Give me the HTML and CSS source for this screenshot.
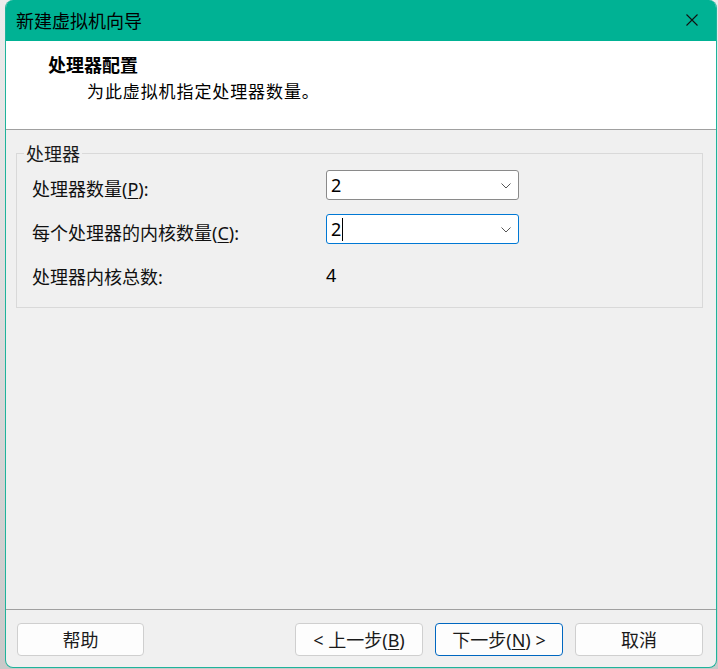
FILE: index.html
```html
<!DOCTYPE html>
<html lang="zh-CN">
<head>
<meta charset="utf-8">
<title>新建虚拟机向导</title>
<link rel="stylesheet" href="styles.css">
</head>
<body>
<div class="window">
  <div class="titlebar">
    <span class="title">新建虚拟机向导</span>
    <span class="close" aria-label="关闭">
      <svg width="12" height="12" viewBox="0 0 12 12"><path d="M0.5 0.5L11.5 11.5M11.5 0.5L0.5 11.5" stroke="#111" stroke-width="1.1" fill="none"/></svg>
    </span>
  </div>
  <div class="header">
    <div class="heading">处理器配置</div>
    <div class="subtitle">为此虚拟机指定处理器数量。</div>
  </div>
  <div class="content">
    <fieldset class="group">
      <legend class="legend">处理器</legend>
      <div class="rows">
        <label class="label">处理器数量(<u>P</u>):</label>
        <div class="combo">
          <span class="value">2</span>
          <svg class="chev" width="10" height="6" viewBox="0 0 10 6"><polyline points="0.5,0.5 5,5 9.5,0.5" fill="none" stroke="#555" stroke-width="1"/></svg>
        </div>
        <label class="label">每个处理器的内核数量(<u>C</u>):</label>
        <div class="combo focused">
          <span class="value">2<span class="caret"></span></span>
          <svg class="chev" width="10" height="6" viewBox="0 0 10 6"><polyline points="0.5,0.5 5,5 9.5,0.5" fill="none" stroke="#555" stroke-width="1"/></svg>
        </div>
        <span class="label">处理器内核总数:</span>
        <span class="total">4</span>
      </div>
    </fieldset>
  </div>
  <div class="footer">
    <button class="btn">帮助</button>
    <div class="spacer"></div>
    <button class="btn">&lt; 上一步(<u>B</u>)</button>
    <button class="btn primary">下一步(<u>N</u>) &gt;</button>
    <button class="btn">取消</button>
  </div>
</div>
</body>
</html>
```

FILE: styles.css
```css
html, body {
  margin: 0;
  padding: 0;
}
body {
  width: 718px;
  height: 669px;
  background: linear-gradient(#ececec, #c9c9c9);
  font-family: "Noto Sans", "Noto Sans CJK SC", sans-serif;
  color: #000;
  overflow: hidden;
}
.window {
  margin-left: 5px;
  width: 712px;
  height: 668px;
  box-sizing: border-box;
  border: 1px solid #1fb39b;
  border-top: 0;
  border-radius: 8px;
  overflow: hidden;
  display: flex;
  flex-direction: column;
  background: #f0f0f0;
}
.titlebar {
  height: 41px;
  flex: none;
  background: #00b294;
  display: flex;
  align-items: center;
  padding-left: 10px;
  padding-right: 13px;
  font-family: "Noto Sans CJK SC", sans-serif;
  font-size: 18px;
}
.title {
  flex: 1;
  line-height: 40px;
  padding-bottom: 2px;
}
.close {
  display: flex;
  width: 12px;
  height: 12px;
  margin-right: 5px;
  margin-top: -2px;
}
.header {
  flex: none;
  background: #fff;
  height: 89px;
  border-bottom: 1px solid #a0a0a0;
  padding-top: 12px;
  box-sizing: border-box;
  font-family: "Noto Sans CJK SC", sans-serif;
}
.heading {
  font-size: 18px;
  font-weight: 700;
  line-height: 22px;
  padding-left: 42px;
}
.subtitle {
  font-size: 17px;
  letter-spacing: 0.9px;
  line-height: 22px;
  margin-top: 5px;
  padding-left: 81px;
}
.content {
  flex: 1;
  padding: 13px 13px 0 10px;
}
.group {
  margin: 0;
  border: 1px solid #d9d9d9;
  padding: 0 0 19px 7px;
  min-width: 0;
}
.legend {
  padding: 0 2px;
  font-family: "Noto Sans CJK SC", sans-serif;
  font-size: 18px;
  line-height: 20px;
  color: #1a1a1a;
}
.rows {
  display: grid;
  grid-template-columns: 294px 193px;
  grid-auto-rows: 30px;
  row-gap: 14px;
  align-items: center;
  padding-left: 8px;
  margin-top: 7px;
}
.label {
  font-size: 18px;
  color: #111;
  padding-top: 5px;
}
.label u {
  text-underline-offset: 2px;
}
.combo {
  height: 30px;
  box-sizing: border-box;
  border: 1px solid #8a8a8a;
  border-radius: 3px;
  background: #fff;
  display: flex;
  align-items: center;
  padding: 0 7px 0 4px;
}
.combo.focused {
  border-color: #0078d4;
}
.value {
  flex: 1;
  font-size: 18px;
  line-height: 28px;
  display: flex;
  align-items: center;
}
.caret {
  display: inline-block;
  width: 1px;
  height: 23px;
  background: #000;
  margin-left: 1px;
}
.chev {
  margin-top: 1px;
}
.total {
  font-size: 18px;
  padding-top: 3px;
}
.footer {
  flex: none;
  border-top: 1px solid #a0a0a0;
  padding: 13px 13px 11px 11px;
  display: flex;
  gap: 12px;
}
.spacer {
  flex: 1;
}
.btn {
  width: 128px;
  height: 33px;
  box-sizing: border-box;
  border: 1px solid #cfcfcf;
  border-radius: 4px;
  background: #fdfdfd;
  font-family: "Noto Sans", "Noto Sans CJK SC", sans-serif;
  font-size: 18px;
  color: #1a1a1a;
  padding: 0;
  line-height: 30px;
}
.btn:first-child {
  width: 127px;
}
.btn.primary {
  border-color: #0067c0;
}
.btn u {
  text-underline-offset: 2px;
}
```
